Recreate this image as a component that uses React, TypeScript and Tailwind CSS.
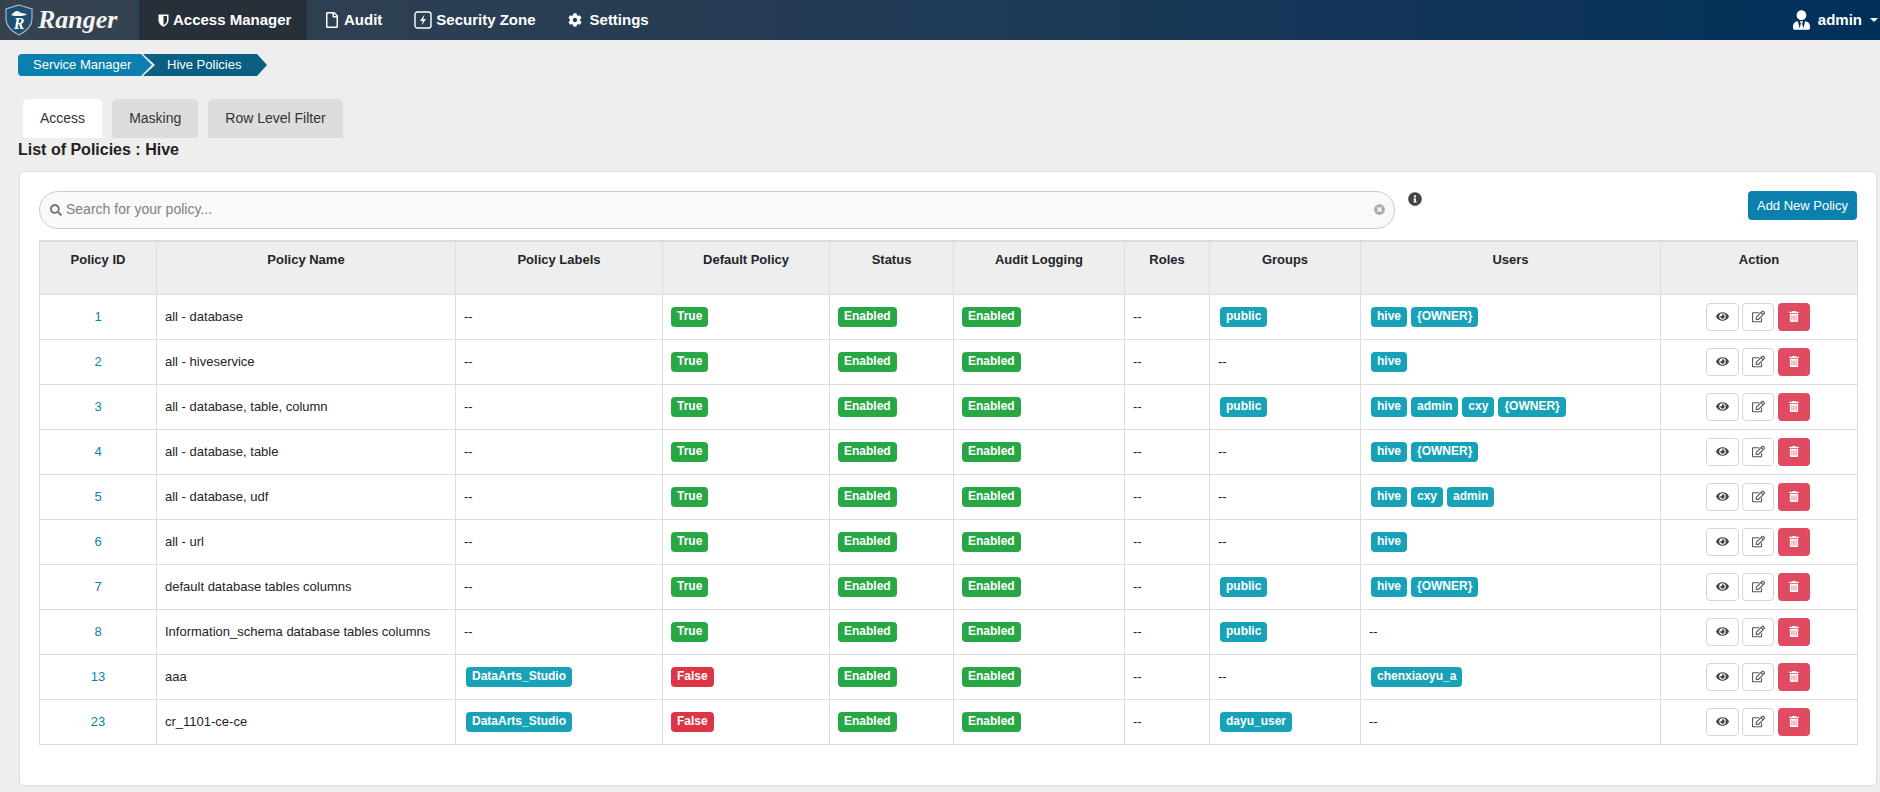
import type { ReactNode } from "react";
import {
  FaCog,
  FaEye,
  FaInfoCircle,
  FaRegEdit,
  FaRegFile,
  FaSearch,
  FaTimesCircle,
  FaTrashAlt,
  FaUserTie,
} from "react-icons/fa";

type Policy = {
  id: number;
  name: string;
  labels?: string[];
  isDefault: boolean;
  groups: string[];
  users: string[];
};

const policies: Policy[] = [
  { id: 1, name: "all - database", isDefault: true, groups: ["public"], users: ["hive", "{OWNER}"] },
  { id: 2, name: "all - hiveservice", isDefault: true, groups: [], users: ["hive"] },
  { id: 3, name: "all - database, table, column", isDefault: true, groups: ["public"], users: ["hive", "admin", "cxy", "{OWNER}"] },
  { id: 4, name: "all - database, table", isDefault: true, groups: [], users: ["hive", "{OWNER}"] },
  { id: 5, name: "all - database, udf", isDefault: true, groups: [], users: ["hive", "cxy", "admin"] },
  { id: 6, name: "all - url", isDefault: true, groups: [], users: ["hive"] },
  { id: 7, name: "default database tables columns", isDefault: true, groups: ["public"], users: ["hive", "{OWNER}"] },
  { id: 8, name: "Information_schema database tables columns", isDefault: true, groups: ["public"], users: [] },
  { id: 13, name: "aaa", labels: ["DataArts_Studio"], isDefault: false, groups: [], users: ["chenxiaoyu_a"] },
  { id: 23, name: "cr_1101-ce-ce", labels: ["DataArts_Studio"], isDefault: false, groups: ["dayu_user"], users: [] },
];

const headers = [
  { label: "Policy ID", width: "w-[117px]" },
  { label: "Policy Name", width: "w-[299px]" },
  { label: "Policy Labels", width: "w-[207px]" },
  { label: "Default Policy", width: "w-[167px]" },
  { label: "Status", width: "w-[124px]" },
  { label: "Audit Logging", width: "w-[171px]" },
  { label: "Roles", width: "w-[85px]" },
  { label: "Groups", width: "w-[151px]" },
  { label: "Users", width: "w-[300px]" },
  { label: "Action", width: "w-[197px]" },
];

const Badge = ({ color, children }: { color: string; children: ReactNode }) => (
  <span className={`inline-block h-5 rounded-[4px] px-[6px] text-[12px] font-bold leading-[19px] whitespace-nowrap text-white ${color}`}>
    {children}
  </span>
);

const InfoBadges = ({ items }: { items?: string[] }) => {
  if (!items || items.length === 0) return <span>--</span>;
  return (
    <div className="ml-[2px] flex gap-[4px] pt-[1px]">
      {items.map((item) => (
        <Badge key={item} color="bg-[#17a2b8]">
          {item}
        </Badge>
      ))}
    </div>
  );
};

const Logo = () => (
  <div className="flex h-10 w-[139px] items-center pl-[4px]">
    <svg viewBox="0 0 30 32" className="h-[32px] w-[30px]">
      <path d="M15 1 L28 5 V15 C28 23 21 28 15 31 C9 28 2 23 2 15 V5 Z" fill="#1c4f70" stroke="#aab8c2" strokeWidth="1.2" />
      <path d="M7 11 C9 10 10 7 13 7 C15 7 16 9 18 9 C20 9 21 10 23 10 C21 12 18 12 15 12 C12 12 9 12 7 11 Z" fill="#f2f4f5" />
      <text x="15" y="25" textAnchor="middle" fontFamily="'Liberation Serif', serif" fontStyle="italic" fontWeight="700" fontSize="16" fill="#ffffff">
        R
      </text>
    </svg>
    <span className="ml-[4px] font-['Liberation_Serif',serif] text-[26px] font-bold italic leading-none text-[#f4f4f4]">Ranger</span>
  </div>
);

const ShieldIcon = () => (
  <svg viewBox="0 0 11 13" className="h-[13px] w-[11px]">
    <path d="M0.5 0.5 H10.5 V6.5 C10.5 9.5 8 11.5 5.5 12.8 C3 11.5 0.5 9.5 0.5 6.5 Z" fill="#fff" />
    <path d="M5.5 2 H9 V6.5 C9 8.5 7.3 10 5.5 11 Z" fill="#272f38" />
  </svg>
);

const ZoneIcon = () => (
  <svg viewBox="0 0 18 18" className="h-[18px] w-[18px]">
    <rect x="1" y="1" width="16" height="16" rx="2.5" fill="none" stroke="#fff" strokeWidth="1.4" />
    <path d="M10.5 3.5 L6 10 H8.8 L7.5 14.5 L12 8 H9.3 Z" fill="#fff" />
  </svg>
);

const Navbar = () => (
  <nav className="flex h-10 items-center bg-gradient-to-r from-[#36434f] to-[#00305a] text-[15px] font-bold text-white">
    <Logo />
    <div className="flex h-10 w-[168px] items-center bg-[#272f38] pl-[19px]">
      <ShieldIcon />
      <span className="ml-[4px]">Access Manager</span>
    </div>
    <div className="ml-[18px] flex items-center">
      <FaRegFile className="h-[16px] w-[14px]" />
      <span className="ml-[5px]">Audit</span>
    </div>
    <div className="ml-[32px] flex items-center">
      <ZoneIcon />
      <span className="ml-[4px]">Security Zone</span>
    </div>
    <div className="ml-[32px] flex items-center">
      <FaCog className="h-[14px] w-[14px]" />
      <span className="ml-[8px]">Settings</span>
    </div>
    <div className="ml-auto flex items-center pr-[2px]">
      <FaUserTie className="h-[20px] w-[17px]" />
      <span className="ml-[8px]">admin</span>
      <span className="ml-[8px] h-0 w-0 border-x-[4px] border-t-[4px] border-x-transparent border-t-white" />
    </div>
  </nav>
);

const Breadcrumb = () => (
  <div className="ml-[18px] mt-[14px] flex h-[22px] text-[13px] leading-[22px] text-white">
    <div className="w-[134px] rounded-l-[4px] bg-[#0b7fad] pl-[15px] [clip-path:polygon(0_0,123px_0,100%_50%,123px_100%,0_100%)]">Service Manager</div>
    <div className="-ml-[9px] w-[124px] bg-[#0a5f82] pl-[24px] [clip-path:polygon(0_0,114px_0,100%_50%,114px_100%,0_100%,12px_50%)]">Hive Policies</div>
  </div>
);

const Tabs = () => (
  <div className="ml-[23px] mt-[23px] flex h-[39px] gap-[10px] text-[14px] leading-[38px] text-[#333]">
    <div className="rounded-t-[5px] bg-white px-[17px]">Access</div>
    <div className="rounded-t-[5px] bg-[#dddddd] px-[17px]">Masking</div>
    <div className="rounded-t-[5px] bg-[#dddddd] px-[17px]">Row Level Filter</div>
  </div>
);

const SearchRow = () => (
  <div className="flex h-[49px] items-start">
    <div className="flex h-[38px] w-[1356px] items-center rounded-[19px] border border-[#cccccc] bg-[#f9f9f9] pb-[1px] pl-[10px] pr-[9px]">
      <FaSearch className="h-[12px] w-[12px] text-[#777]" />
      <span className="ml-[4px] text-[14px] text-[#808080]">Search for your policy...</span>
      <FaTimesCircle className="ml-auto h-[11px] w-[11px] text-[#aaa]" />
    </div>
    <FaInfoCircle className="ml-[13px] mt-[1px] h-[14px] w-[14px] text-[#444]" />
    <button className="ml-auto h-[29px] w-[109px] rounded-[4px] bg-[#0b7fad] text-[13px] text-white">Add New Policy</button>
  </div>
);

const Actions = () => (
  <div className="flex items-center justify-center pr-[2px]">
    <button className="flex h-7 w-[33px] items-center justify-center rounded-[4px] border border-[#d6d6d6] bg-white">
      <FaEye className="h-[13px] w-[13px] text-[#444]" />
    </button>
    <button className="ml-[3px] flex h-7 w-[32px] items-center justify-center rounded-[4px] border border-[#d6d6d6] bg-white">
      <FaRegEdit className="h-[13px] w-[13px] text-[#555]" />
    </button>
    <button className="ml-[4px] flex h-7 w-[32px] items-center justify-center rounded-[4px] bg-[#e04b62]">
      <FaTrashAlt className="h-[11px] w-[10px] text-white" />
    </button>
  </div>
);

const cell = "border border-[#dddddd] px-[8px] align-middle";

const PolicyTable = () => (
  <table className="w-[1818px] table-fixed text-[13px] text-[#212529]">
    <thead>
      <tr className="h-[53px] bg-[#eeeeee]">
        {headers.map((h) => (
          <th key={h.label} className={`${h.width} border border-[#dddddd] border-t-2 px-[8px] pt-[9px] align-top font-bold leading-[18px]`}>
            {h.label}
          </th>
        ))}
      </tr>
    </thead>
    <tbody>
      {policies.map((p) => (
        <tr key={p.id} className="h-[45px]">
          <td className={`${cell} text-center text-[#0b7fad]`}>{p.id}</td>
          <td className={cell}>{p.name}</td>
          <td className={cell}>
            <InfoBadges items={p.labels} />
          </td>
          <td className={cell}>
            {p.isDefault ? <Badge color="bg-[#28a745]">True</Badge> : <Badge color="bg-[#dc3545]">False</Badge>}
          </td>
          <td className={cell}>
            <Badge color="bg-[#28a745]">Enabled</Badge>
          </td>
          <td className={cell}>
            <Badge color="bg-[#28a745]">Enabled</Badge>
          </td>
          <td className={cell}>--</td>
          <td className={cell}>
            <InfoBadges items={p.groups} />
          </td>
          <td className={cell}>
            <InfoBadges items={p.users} />
          </td>
          <td className={cell}>
            <Actions />
          </td>
        </tr>
      ))}
    </tbody>
  </table>
);

export default function App() {
  return (
    <div className="h-[792px] overflow-hidden bg-[#eeeeee] font-['Liberation_Sans',Arial,sans-serif]">
      <Navbar />
      <Breadcrumb />
      <Tabs />
      <h3 className="ml-[18px] pt-[1px] text-[16px] font-bold leading-[21px] text-[#222]">List of Policies : Hive</h3>
      <section className="ml-[19px] mt-[11px] h-[615px] w-[1858px] rounded-[4px] border border-[#dddddd] bg-white px-[19px] pt-[19px]">
        <SearchRow />
        <PolicyTable />
      </section>
    </div>
  );
}
